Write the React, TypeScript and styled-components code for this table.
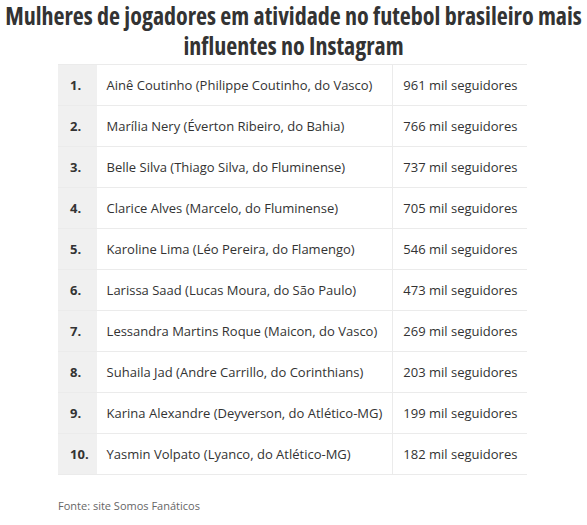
import styled, { createGlobalStyle } from "styled-components";

const GlobalStyle = createGlobalStyle`
  body {
    margin: 0;
    background: #fff;
    font-family: "Open Sans", "Liberation Sans", sans-serif;
    color: #333;
  }
`;

const rows: [string, string][] = [
  ["Ainê Coutinho (Philippe Coutinho, do Vasco)", "961 mil seguidores"],
  ["Marília Nery (Éverton Ribeiro, do Bahia)", "766 mil seguidores"],
  ["Belle Silva (Thiago Silva, do Fluminense)", "737 mil seguidores"],
  ["Clarice Alves (Marcelo, do Fluminense)", "705 mil seguidores"],
  ["Karoline Lima (Léo Pereira, do Flamengo)", "546 mil seguidores"],
  ["Larissa Saad (Lucas Moura, do São Paulo)", "473 mil seguidores"],
  ["Lessandra Martins Roque (Maicon, do Vasco)", "269 mil seguidores"],
  ["Suhaila Jad (Andre Carrillo, do Corinthians)", "203 mil seguidores"],
  ["Karina Alexandre (Deyverson, do Atlético-MG)", "199 mil seguidores"],
  ["Yasmin Volpato (Lyanco, do Atlético-MG)", "182 mil seguidores"],
];

const App = () => {
  return (
    <Page>
      <GlobalStyle />
      <Title>
        Mulheres de jogadores em atividade no futebol brasileiro mais influentes no Instagram
      </Title>
      <Table>
        <tbody>
          {rows.map(([name, followers], i) => (
            <tr key={i}>
              <RankCell>{i + 1}.</RankCell>
              <Cell>{name}</Cell>
              <Cell>{followers}</Cell>
            </tr>
          ))}
        </tbody>
      </Table>
      <Source>Fonte: site Somos Fanáticos</Source>
    </Page>
  );
};

export default App;

const Page = styled.div`
  width: 587px;
  padding-top: 1px;
`;

const Title = styled.h1`
  margin: 0 auto;
  width: 584px;
  text-align: center;
  font-size: 24px;
  font-weight: 700;
  font-stretch: 75%;
  line-height: 30px;
  color: #333;
`;

const Table = styled.table`
  margin: 3px 0 0 58px;
  width: 469px;
  border-collapse: collapse;
  font-size: 13px;
  border-top: 1px solid #ebebeb;
  border-bottom: 1px solid #ebebeb;

  tr + tr td {
    border-top: 1px solid #ebebeb;
  }
`;

const Cell = styled.td`
  height: 40px;
  padding: 0 10px;
  white-space: nowrap;
  color: #333;

  & + & {
    border-left: 1px solid #ebebeb;
  }
`;

const RankCell = styled.td`
  width: 20px;
  padding: 0 8px 0 12px;
  background: #f0f0f0;
  font-weight: 700;
  color: #333;
`;

const Source = styled.div`
  margin: 23px 0 0 58px;
  font-size: 11px;
  color: #666;
`;
